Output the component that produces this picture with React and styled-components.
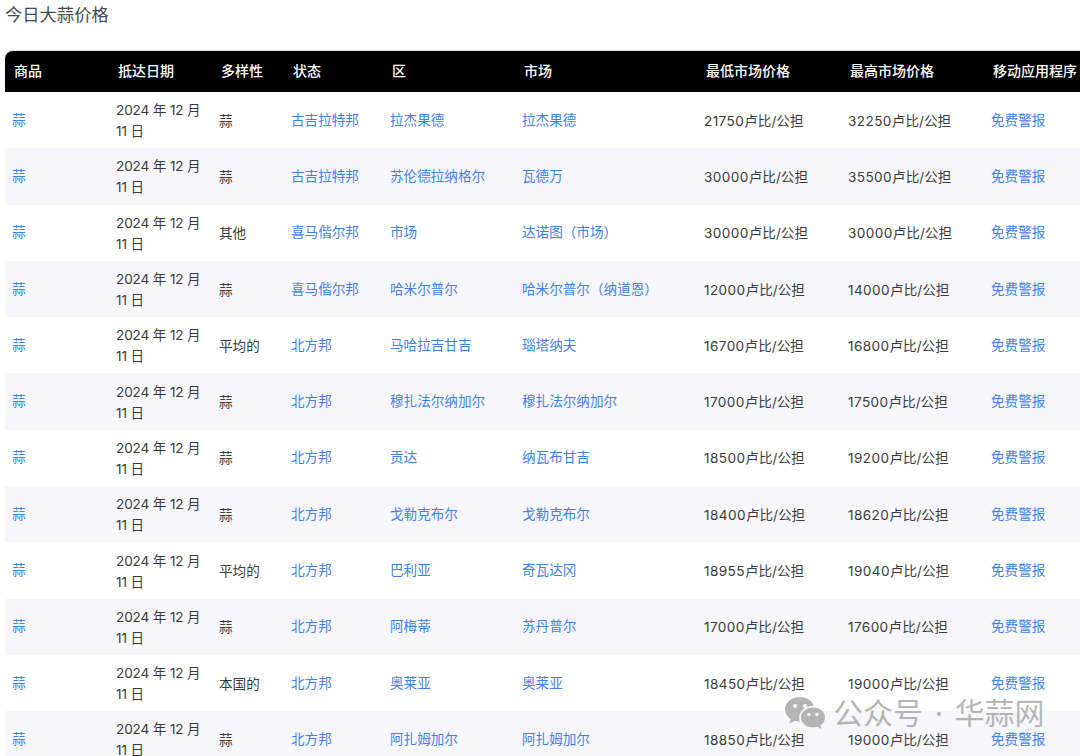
import * as React from "react";
import styled, { createGlobalStyle } from "styled-components";

const COLUMNS = [104, 103, 72, 99, 132, 182, 144, 143, 120];
const HEADERS = ["商品", "抵达日期", "多样性", "状态", "区", "市场", "最低市场价格", "最高市场价格", "移动应用程序"];

const ROWS = [
  ["蒜", "古吉拉特邦", "拉杰果德", "拉杰果德", "21750", "32250"],
  ["蒜", "古吉拉特邦", "苏伦德拉纳格尔", "瓦德万", "30000", "35500"],
  ["其他", "喜马偕尔邦", "市场", "达诺图（市场）", "30000", "30000"],
  ["蒜", "喜马偕尔邦", "哈米尔普尔", "哈米尔普尔（纳道恩）", "12000", "14000"],
  ["平均的", "北方邦", "马哈拉吉甘吉", "瑙塔纳夫", "16700", "16800"],
  ["蒜", "北方邦", "穆扎法尔纳加尔", "穆扎法尔纳加尔", "17000", "17500"],
  ["蒜", "北方邦", "贡达", "纳瓦布甘吉", "18500", "19200"],
  ["蒜", "北方邦", "戈勒克布尔", "戈勒克布尔", "18400", "18620"],
  ["平均的", "北方邦", "巴利亚", "奇瓦达冈", "18955", "19040"],
  ["蒜", "北方邦", "阿梅蒂", "苏丹普尔", "17000", "17600"],
  ["本国的", "北方邦", "奥莱亚", "奥莱亚", "18450", "19000"],
  ["蒜", "北方邦", "阿扎姆加尔", "阿扎姆加尔", "18850", "19000"],
];

const App = () => (
  <Page>
    <GlobalStyle />
    <Title>今日大蒜价格</Title>
    <Table>
      <colgroup>
        {COLUMNS.map((width, i) => (
          <col key={i} style={{ width }} />
        ))}
      </colgroup>
      <thead>
        <tr>
          {HEADERS.map((label) => (
            <HeadCell key={label}>{label}</HeadCell>
          ))}
        </tr>
      </thead>
      <tbody>
        {ROWS.map((row, i) => (
          <Row key={i}>
            <Cell><Link>蒜</Link></Cell>
            <Cell><DateText>2024 年 12 月<br />11 日</DateText></Cell>
            <Cell>{row[0]}</Cell>
            <Cell><Link>{row[1]}</Link></Cell>
            <Cell><Link>{row[2]}</Link></Cell>
            <Cell><Link>{row[3]}</Link></Cell>
            <Cell><Price>{row[4]}</Price>卢比/公担</Cell>
            <Cell><Price>{row[5]}</Price>卢比/公担</Cell>
            <Cell><Link>免费警报</Link></Cell>
          </Row>
        ))}
      </tbody>
    </Table>
    <Watermark>
      <svg width="42" height="34" viewBox="0 0 42 34" fill="#b4b4b4">
        <path d="M16 1C7.7 1 1 6.500 1 13.300c0 3.900 2.200 7.300 5.600 9.600L5.200 27.600l5.300-2.800c1.600.5 3.400.8 5.200.9-.4-1.200-.6-2.400-.6-3.700 0-6.600 6.200-11.900 13.800-11.900h1C28.400 4.600 22.700 1 16 1z" />
        <circle cx="11" cy="10" r="2" fill="#fff" />
        <circle cx="21" cy="10" r="2" fill="#fff" />
        <path d="M29 11.500c-6.700 0-12 4.400-12 9.900s5.300 9.900 12 9.900c1.400 0 2.800-.2 4-.6l4.400 2.400-1.100-3.900c3-1.800 4.700-4.600 4.700-7.800 0-5.500-5.300-9.900-12-9.900z" />
        <circle cx="25" cy="18.500" r="1.700" fill="#fff" />
        <circle cx="33" cy="18.500" r="1.700" fill="#fff" />
      </svg>
      <WatermarkText>公众号 · 华蒜网</WatermarkText>
    </Watermark>
  </Page>
);

const GlobalStyle = createGlobalStyle`
  html, body {
    margin: 0;
    height: 100%;
    background: #fff;
  }
  body {
    overflow: hidden;
    font-family: Inter, "Noto Sans CJK SC", sans-serif;
  }
`;

const Page = styled.div`
  position: relative;
  height: 756px;
  width: 1080px;
  overflow: hidden;
  padding: 4px 0 0 5px;
  box-sizing: border-box;
`;

const Title = styled.h1`
  margin: 0 0 25px;
  font-size: 17.3px;
  line-height: 22px;
  font-weight: 400;
  color: #4a4a4a;
`;

const Table = styled.table`
  table-layout: fixed;
  width: 1099px;
  border-collapse: separate;
  border-spacing: 0;
  font-size: 13.6px;
  color: #3a3a3a;
  border-radius: 8px 8px 0 0;
  box-shadow: 0 -1px 0 #ddd;
`;

const HeadCell = styled.th`
  height: 41px;
  padding: 0 0 4px 9px;
  box-sizing: border-box;
  background: #000;
  color: #fff;
  font-size: 14px;
  font-weight: 500;
  text-align: left;
  white-space: nowrap;
  &:first-child {
    border-top-left-radius: 8px;
  }
`;

const Row = styled.tr`
  height: 56.3px;
  background: #fff;
  &:nth-child(even) {
    background: #f7f7fb;
  }
`;

const Cell = styled.td`
  padding: 2px 0 0 7px;
  line-height: 21px;
  white-space: nowrap;
`;

const Link = styled.a`
  display: inline-block;
  margin-bottom: 2px;
  color: #3f7ff2;
`;

const DateText = styled.span`
  letter-spacing: -0.15px;
`;

const Price = styled.span`
  letter-spacing: 0.4px;
`;

const Watermark = styled.div`
  position: absolute;
  left: 784px;
  top: 696px;
  display: flex;
  align-items: center;
  gap: 7px;
`;

const WatermarkText = styled.span`
  font-size: 30px;
  font-weight: 400;
  line-height: 34px;
  word-spacing: 3px;
  color: rgba(120, 120, 120, 0.55);
  white-space: nowrap;
`;

export default App;
